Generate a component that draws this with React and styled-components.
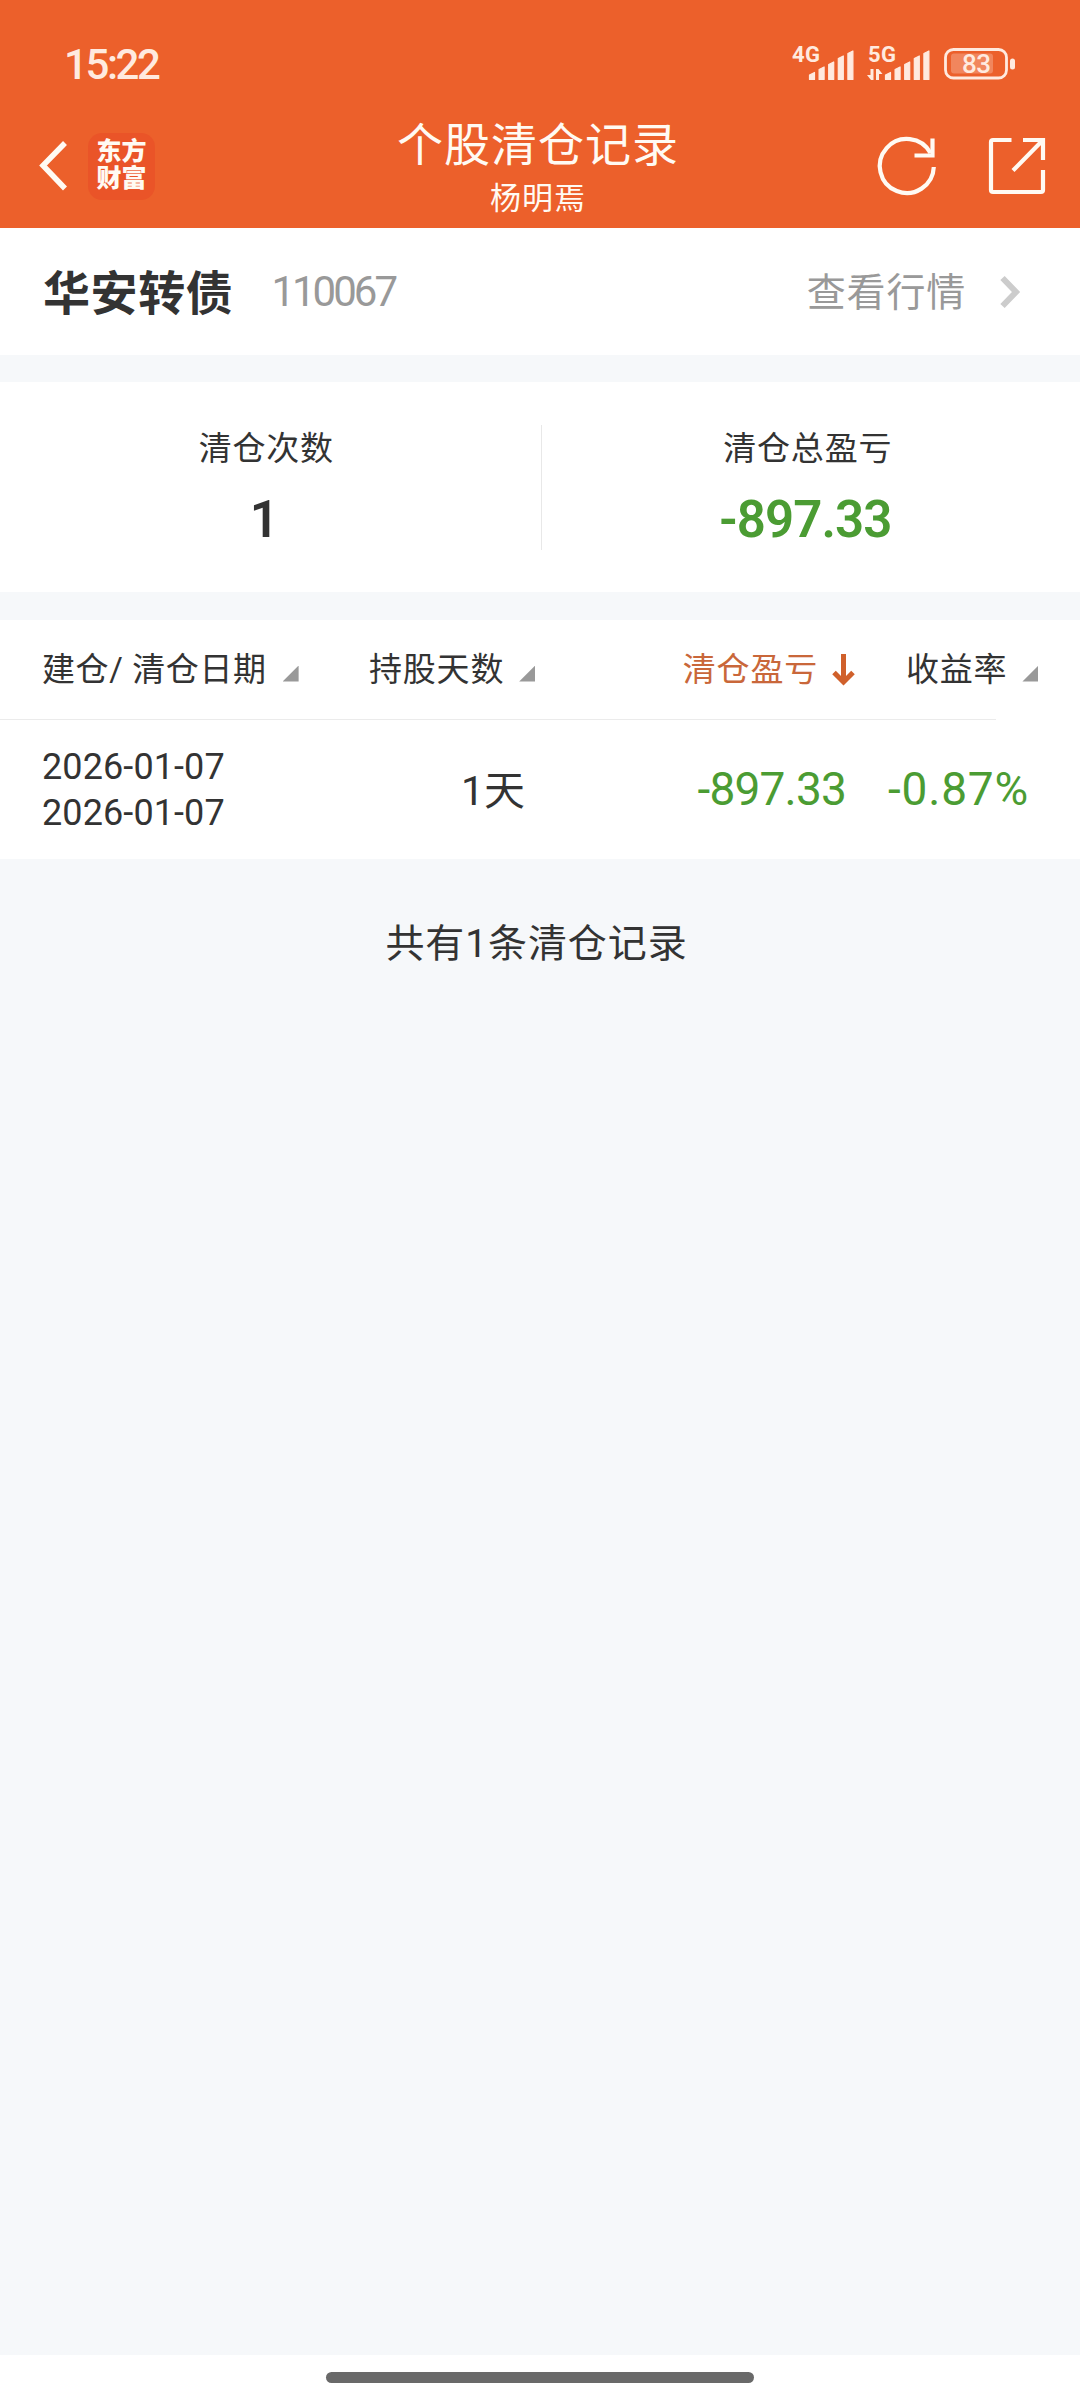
import React from "react";
import styled, { createGlobalStyle } from "styled-components";

const columns = [
  { id: "date", title: "建仓/ 清仓日期" },
  { id: "days", title: "持股天数" },
  { id: "profit", title: "清仓盈亏", active: true },
  { id: "rate", title: "收益率" },
];

const records = [
  { id: 1, open: "2026-01-07", close: "2026-01-07", days: 1, profit: "-897.33", rate: "-0.87%" },
];

const barTops = [26, 20.5, 15.5, 9.5, 4.5];

const Signal = ({ label, data }) => (
  <svg width="63" height="36" viewBox="0 0 63 36" fill="currentColor">
    <NetText x="0" y="16" textLength="28">
      {label}
    </NetText>
    {barTops.map((top, i) => (
      <path
        key={top}
        d={`M${17.5 + i * 9.6} 33.5V${top + 3}l5 -2.500V33.5z`}
        stroke="currentColor"
        strokeLinejoin="round"
        strokeWidth="1.2"
      />
    ))}
    {data && <path d="M5.500 23v11h-2.500l-4 -5h3.500v-6zM8 34v-11h2.500l4 5h-3.500v6z" />}
  </svg>
);

const Battery = () => (
  <svg width="72" height="32" viewBox="0 0 72 32" fill="none">
    <rect x="1.500" y="1.500" width="61" height="28.500" rx="8" stroke="currentColor" strokeWidth="2.800" />
    <rect x="7" y="5.500" width="42" height="20" rx="3" fill="currentColor" opacity="0.28" />
    <rect x="66" y="10.500" width="5" height="11" rx="2.500" fill="currentColor" />
    <BatteryText x="18" y="25" textLength="29">
      83
    </BatteryText>
  </svg>
);

const App = () => {
  return (
    <>
      <GlobalStyle />
      <Page>
        <Header>
          <StatusBar>
            <Time>15:22</Time>
            <Indicators>
              <Signal label="4G" />
              <Signal label="5G" data />
              <Battery />
            </Indicators>
          </StatusBar>
          <NavBar>
            <NavLeft>
              <svg width="28" height="50" viewBox="0 0 28 50" fill="none" stroke="currentColor" strokeWidth="5.5">
                <path d="M25 2L3 24.500L25 47.500" />
              </svg>
              <Logo>
                <span>东方</span>
                <span>财富</span>
              </Logo>
            </NavLeft>
            <Heading>
              <Title>个股清仓记录</Title>
              <Subtitle>杨明焉</Subtitle>
            </Heading>
            <NavRight>
              <svg width="60" height="60" viewBox="0 0 60 60" fill="none" stroke="currentColor" strokeWidth="4.2">
                <path d="M56.800 31A27 27 0 1 1 53.500 17" />
                <path d="M55.500 2.500V19.500H37.500" />
              </svg>
              <svg width="58" height="58" viewBox="0 0 58 58" fill="none" stroke="currentColor" strokeWidth="4.2">
                <path d="M23.500 3H5Q3 3 3 5V53Q3 55 5 55H53Q55 55 55 53V33" />
                <path d="M35 3H55V23M54 4L25 33.500" />
              </svg>
            </NavRight>
          </NavBar>
        </Header>

        <StockRow>
          <StockName>华安转债</StockName>
          <StockCode>110067</StockCode>
          <QuoteLink>
            <span>查看行情</span>
            <svg width="20" height="32" viewBox="0 0 20 32" fill="none" stroke="#cccccc" strokeWidth="6">
              <path d="M2.500 2L16 16L2.500 30" />
            </svg>
          </QuoteLink>
        </StockRow>

        <Summary>
          <SummaryItem $shift={4}>
            <SummaryLabel>清仓次数</SummaryLabel>
            <SummaryValue>1</SummaryValue>
          </SummaryItem>
          <Divider />
          <SummaryItem $shift={3}>
            <SummaryLabel>清仓总盈亏</SummaryLabel>
            <SummaryValue $down>-897.33</SummaryValue>
          </SummaryItem>
        </Summary>

        <Table>
          <TableHead>
            {columns.map(({ id, title, active }) => (
              <HeadCell key={id} $active={active}>
                <span>{title}</span>
                {active ? (
                  <svg width="23" height="32" viewBox="0 0 23 32" fill="none" stroke="#d0602b" strokeWidth="5">
                    <path d="M11.500 0V28M2 18.500L11.500 28L21 18.500" />
                  </svg>
                ) : (
                  <SortMark />
                )}
              </HeadCell>
            ))}
          </TableHead>
          <Line />
          {records.map(({ id, open, close, days, profit, rate }) => (
            <Record key={id}>
              <Dates>
                <span>{open}</span>
                <span>{close}</span>
              </Dates>
              <Days>{days}天</Days>
              <Profit>{profit}</Profit>
              <Rate>{rate}</Rate>
            </Record>
          ))}
        </Table>

        <Total>共有{records.length}条清仓记录</Total>

        <HomeArea>
          <HomeBar />
        </HomeArea>
      </Page>
    </>
  );
};

export default App;

const GlobalStyle = createGlobalStyle`
  body {
    margin: 0;
    font-family: Roboto, "Noto Sans CJK SC", sans-serif;
  }
  svg {
    display: block;
    flex-shrink: 0;
    overflow: visible;
  }
`;
const Page = styled.div`
  width: 1080px;
  height: 2400px;
  display: flex;
  flex-direction: column;
  background: #f6f8fa;
  color: #333333;
  white-space: nowrap;
`;

const Header = styled.div`
  height: 228px;
  background: #ec602b;
  color: #fffaf3;
`;
const StatusBar = styled.div`
  height: 104px;
  box-sizing: border-box;
  padding: 24px 64px 0 64px;
  display: flex;
  align-items: center;
  justify-content: space-between;
  color: #ffeadf;
`;
const Time = styled.div`
  font-weight: 500;
  font-size: 42px;
  letter-spacing: -2.4px;
`;
const Indicators = styled.div`
  display: flex;
  align-items: center;
  gap: 13px;
`;
const NetText = styled.text`
  font-family: Roboto, sans-serif;
  font-weight: 700;
  font-size: 22px;
`;
const BatteryText = styled.text`
  font-family: Roboto, sans-serif;
  font-weight: 500;
  font-size: 26px;
  fill: currentColor;
`;

const NavBar = styled.div`
  height: 124px;
  display: grid;
  grid-template-columns: 1fr 300px 1fr;
`;
const NavLeft = styled.div`
  padding: 0 0 0 40px;
  display: flex;
  align-items: center;
  gap: 20px;
`;
const Logo = styled.div`
  width: 67px;
  height: 67px;
  box-sizing: border-box;
  padding-bottom: 2px;
  border-radius: 14px;
  background: #ea5428;
  display: flex;
  flex-direction: column;
  align-items: center;
  justify-content: center;
  font-weight: 900;
  font-size: 25px;
  line-height: 27px;
`;
const Heading = styled.div`
  padding: 7px 4px 0 0;
  display: flex;
  flex-direction: column;
  align-items: center;
`;
const Title = styled.div`
  font-size: 46px;
  letter-spacing: 1px;
  line-height: 68px;
`;
const Subtitle = styled.div`
  font-size: 31px;
  letter-spacing: 1px;
  line-height: 40px;
`;
const NavRight = styled.div`
  padding: 0 34px 1px 0;
  display: flex;
  align-items: center;
  justify-content: flex-end;
  gap: 51px;
`;

const StockRow = styled.div`
  height: 127px;
  box-sizing: border-box;
  padding: 0 60px 0 43px;
  display: flex;
  align-items: center;
  background: #ffffff;
`;
const StockName = styled.div`
  padding-bottom: 5px;
  font-weight: 700;
  font-size: 47px;
  letter-spacing: 0.6px;
`;
const StockCode = styled.div`
  margin-left: 38px;
  font-size: 42px;
  letter-spacing: -3px;
  color: #999999;
`;
const QuoteLink = styled.div`
  margin-left: auto;
  display: flex;
  align-items: center;
  gap: 34px;
  font-size: 39px;
  letter-spacing: 0.8px;
  color: #999999;

  span {
    padding-bottom: 5px;
  }
`;

const Summary = styled.div`
  height: 210px;
  margin-top: 27px;
  display: flex;
  align-items: center;
  background: #ffffff;
`;
const SummaryItem = styled.div`
  flex: 1;
  display: flex;
  flex-direction: column;
  align-items: center;
  box-sizing: border-box;
  padding-right: ${({ $shift }) => $shift * 2}px;
`;
const Divider = styled.div`
  width: 1px;
  height: 125px;
  background: #e8e8e8;
`;
const SummaryLabel = styled.div`
  margin-top: -2px;
  font-size: 33px;
  letter-spacing: 0.8px;
  line-height: 52px;
`;
const SummaryValue = styled.div`
  margin-top: 15px;
  padding-right: 5px;
  font-weight: 600;
  font-size: 51px;
  letter-spacing: -0.9px;
  line-height: 60px;
  color: ${({ $down }) => ($down ? "#4b9c33" : "#333333")};
`;

const Table = styled.div`
  height: 239px;
  margin-top: 28px;
  background: #ffffff;
`;
const TableHead = styled.div`
  height: 99px;
  display: grid;
  grid-template-columns: 327px 274px 223px 1fr;
  padding-left: 42px;
`;
const HeadCell = styled.div`
  display: flex;
  align-items: center;
  gap: 15px;
  font-size: 33px;
  letter-spacing: 0.8px;
  color: ${({ $active }) => ($active ? "#c9673a" : "#333333")};

  span:first-child {
    padding-bottom: 5px;
  }
  &:first-child {
    gap: 16px;
    letter-spacing: 0.6px;
  }
  &:nth-child(3) {
    gap: 14px;
    justify-content: flex-end;
    padding-right: 11px;
  }
  &:nth-child(4) {
    padding-left: 40px;
  }
`;
const SortMark = styled.span`
  width: 16px;
  height: 16px;
  margin-top: 8px;
  background: #999999;
  clip-path: polygon(100% 0, 100% 100%, 0 100%);
`;
const Line = styled.div`
  width: 996px;
  height: 1px;
  background: #ebebeb;
`;
const Record = styled.div`
  height: 139px;
  display: grid;
  grid-template-columns: 327px 156px 321px 183px;
  align-items: center;
  padding-left: 42px;
`;
const Dates = styled.div`
  padding-top: 1px;
  display: flex;
  flex-direction: column;
  font-size: 36px;
  letter-spacing: 0.1px;
  line-height: 46px;
`;
const Days = styled.div`
  padding-bottom: 6px;
  text-align: right;
  font-size: 41px;
`;
const Profit = styled.div`
  padding-bottom: 1px;
  text-align: right;
  font-size: 46px;
  letter-spacing: -0.8px;
  color: #4b9c33;
`;
const Rate = styled(Profit)`
  letter-spacing: 0.8px;
`;

const Total = styled.div`
  margin-top: 54px;
  padding-right: 7px;
  text-align: center;
  font-size: 39px;
  letter-spacing: 0.9px;
  line-height: 62px;
`;

const HomeArea = styled.div`
  height: 45px;
  margin-top: auto;
  display: flex;
  justify-content: center;
  background: #ffffff;
`;
const HomeBar = styled.div`
  width: 428px;
  height: 11px;
  margin-top: 17px;
  border-radius: 6px;
  background: #696969;
`;
